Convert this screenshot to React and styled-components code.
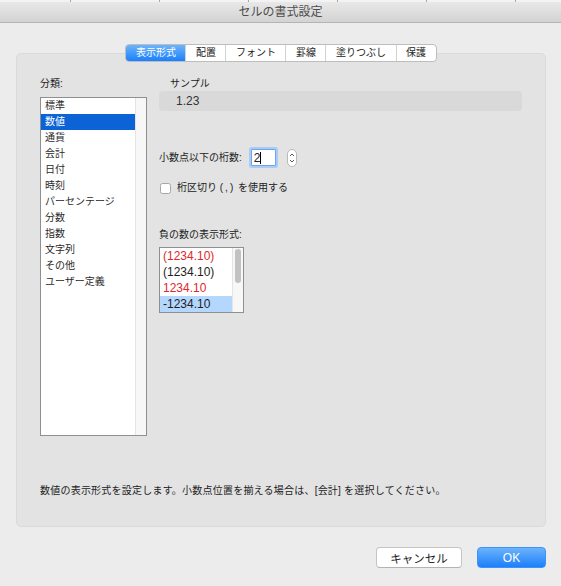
import React from 'react';
import styled, { createGlobalStyle, css } from 'styled-components';

const GlobalStyle = createGlobalStyle`
  html, body {
    margin: 0;
    padding: 0;
    background: #ececec;
  }

  body {
    font-family: "Liberation Sans", "Noto Sans CJK JP", sans-serif;
    color: #222;
  }
`;

const Window = styled('div')`
  width: 561px;
  height: 586px;
  display: flex;
  flex-direction: column;
  background: #ececec;
  overflow: hidden;
`;

const TopStrip = styled('div')`
  height: 2px;
  background: repeating-linear-gradient(to right, #f3f3f3 0 88px, #a8a8a8 88px 89px);
  background-position: -18px 0;
`;

const TitleBar = styled('div')`
  height: 20px;
  display: flex;
  align-items: center;
  justify-content: center;
  background: linear-gradient(#e8e8e8, #d3d3d3);
  border-bottom: 1px solid #b4b4b4;
  font-size: 12px;
  line-height: 20px;
  color: #4d4d4d;
`;

const Body = styled('div')`
  flex: 1;
  display: flex;
  flex-direction: column;
  padding: 0 15px 0 16px;
`;

const TabRow = styled('div')`
  display: flex;
  justify-content: center;
  margin-top: 21px;
  margin-bottom: -9px;
  position: relative;
  z-index: 1;
`;

const Tabs = styled('div')`
  display: flex;
  background: #fff;
  border: 1px solid #bdbdbd;
  border-radius: 4px;
  overflow: hidden;
`;

const Tab = styled('div')`
  padding: 0 9.5px;
  font-size: 10px;
  line-height: 16px;
  color: #222;
  & + & {
    border-left: 1px solid #d2d2d2;
  }
  ${({ active }) => active && css`
    background: linear-gradient(#6cb4fb, #1b80fb);
    color: #fff;
  `}
`;

const Panel = styled('div')`
  height: 474px;
  box-sizing: border-box;
  display: flex;
  flex-direction: column;
  background: #e3e3e3;
  border: 1px solid #dadada;
  border-radius: 5px;
  padding: 23px 23px 0 23px;
`;

const Columns = styled('div')`
  display: grid;
  grid-template-columns: 107px 1fr;
  column-gap: 12px;
`;

const Column = styled('div')`
  display: flex;
  flex-direction: column;
`;

const Label = styled('div')`
  font-size: 10px;
  line-height: 14px;
  padding-left: ${({ indent }) => indent || 0}px;
  margin-top: ${({ top }) => top || 0}px;
  margin-bottom: ${({ bottom }) => bottom || 0}px;
`;

const ListBox = styled('div')`
  height: ${({ h }) => h}px;
  width: ${({ w }) => (w ? `${w}px` : 'auto')};
  box-sizing: border-box;
  display: flex;
  background: #fff;
  border: 1px solid #8f8f8f;
  overflow: hidden;
`;

const Items = styled('div')`
  flex: 1;
  display: flex;
  flex-direction: column;
`;

const Item = styled('div')`
  height: 16px;
  line-height: 16px;
  font-size: 10px;
  padding-left: 4px;
  white-space: nowrap;
  color: #2a2a2a;
  ${({ selected }) => selected && css`
    background: #0b63d5;
    color: #fff;
  `}
`;

const NegItem = styled('div')`
  height: 16px;
  line-height: 16px;
  font-size: 12px;
  padding-left: 3px;
  white-space: nowrap;
  color: ${({ red }) => (red ? '#e0282d' : '#1e1e1e')};
  ${({ selected }) => selected && css`
    background: #b4d7fe;
  `}
`;

const Track = styled('div')`
  width: 10px;
  background: #f7f7f7;
  border-left: 1px solid #e4e4e4;
`;

const Thumb = styled('div')`
  width: 6px;
  height: 34px;
  margin: 1px 0 0 2px;
  border-radius: 3px;
  background: #c2c2c2;
`;

const SampleBox = styled('div')`
  height: 20px;
  padding-left: 17px;
  background: #d9d9d9;
  border-radius: 4px;
  font-size: 12px;
  line-height: 20px;
  color: #333;
`;

const Row = styled('div')`
  display: flex;
  align-items: center;
  height: ${({ h }) => h}px;
  margin-top: ${({ top }) => top}px;
`;

const Field = styled('div')`
  width: 25px;
  height: 17px;
  box-sizing: border-box;
  margin-left: 9px;
  display: flex;
  align-items: center;
  padding-left: 2px;
  background: #fff;
  border: 1px solid #6ea3ee;
  box-shadow: 0 0 0 2px #a9cbf5;
  border-radius: 1px;
  font-size: 12px;
`;

const Caret = styled('span')`
  width: 1px;
  height: 12px;
  background: #000;
`;

const Stepper = styled('div')`
  width: 10px;
  height: 18px;
  box-sizing: border-box;
  margin-left: 11px;
  background: #fff;
  border: 1px solid #b9b9b9;
  border-radius: 5px;
  display: flex;
  align-items: center;
  justify-content: center;
`;

const Check = styled('div')`
  width: 11px;
  height: 11px;
  box-sizing: border-box;
  margin-left: 1px;
  background: #fff;
  border: 1px solid #a6a6a6;
  border-radius: 2.5px;
`;

const CheckText = styled('span')`
  margin-left: 6px;
  font-size: 10px;
  line-height: 14px;
`;

const Spaced = styled('span')`
  letter-spacing: 2px;
`;

const Description = styled('div')`
  margin-top: auto;
  margin-bottom: 28px;
  font-size: 10px;
  line-height: 14px;
  letter-spacing: 0.22px;
`;

const Buttons = styled('div')`
  display: flex;
  justify-content: flex-end;
  gap: 15px;
  margin-top: 20px;
`;

const Button = styled('div')`
  width: ${({ w }) => w}px;
  height: 21px;
  box-sizing: border-box;
  display: flex;
  align-items: center;
  justify-content: center;
  border-radius: 4px;
  font-size: 11.5px;
  background: #fff;
  border: 1px solid #c4c4c4;
  border-bottom-color: #b3b3b3;
  color: #222;
  ${({ primary }) => primary && css`
    font-size: 12px;
    background: linear-gradient(#6bb3fb, #1c7ffb);
    border-color: #3f92f7;
    color: #fff;
  `}
`;

const categories = [
  '標準', '数値', '通貨', '会計', '日付', '時刻', 'パーセンテージ',
  '分数', '指数', '文字列', 'その他', 'ユーザー定義',
];

const negatives = [
  { text: '(1234.10)', red: true },
  { text: '(1234.10)' },
  { text: '1234.10', red: true },
  { text: '-1234.10', selected: true },
];

const tabs = ['表示形式', '配置', 'フォント', '罫線', '塗りつぶし', '保護'];

const StepperIcon = () => (
  <svg width="6" height="12" viewBox="0 0 6 12">
    <path d="M1 4 L3 2 L5 4 M1 8 L3 10 L5 8" fill="none" stroke="#444" strokeWidth="0.9" />
  </svg>
);

export default function App() {
  return (
    <Window>
      <GlobalStyle />
      <TopStrip />
      <TitleBar>セルの書式設定</TitleBar>
      <Body>
        <TabRow>
          <Tabs>
            {tabs.map((t, i) => (
              <Tab key={t} active={i === 0}>{t}</Tab>
            ))}
          </Tabs>
        </TabRow>
        <Panel>
          <Columns>
            <Column>
              <Label bottom={6}>分類:</Label>
              <ListBox h={339}>
                <Items>
                  {categories.map((c) => (
                    <Item key={c} selected={c === '数値'}>{c}</Item>
                  ))}
                </Items>
                <Track />
              </ListBox>
            </Column>
            <Column>
              <Label indent={11}>サンプル</Label>
              <SampleBox>1.23</SampleBox>
              <Row h={21} top={36}>
                <Label>小数点以下の桁数:</Label>
                <Field>2<Caret /></Field>
                <Stepper><StepperIcon /></Stepper>
              </Row>
              <Row h={12} top={14}>
                <Check />
                <CheckText>桁区切り <Spaced>(,)</Spaced> を使用する</CheckText>
              </Row>
              <Label top={34} bottom={5}>負の数の表示形式:</Label>
              <ListBox h={66} w={85}>
                <Items>
                  {negatives.map((n, i) => (
                    <NegItem key={i} red={n.red} selected={n.selected}>{n.text}</NegItem>
                  ))}
                </Items>
                <Track>
                  <Thumb />
                </Track>
              </ListBox>
            </Column>
          </Columns>
          <Description>
            数値の表示形式を設定します。小数点位置を揃える場合は、[会計] を選択してください。
          </Description>
        </Panel>
        <Buttons>
          <Button w={86}>キャンセル</Button>
          <Button w={69} primary>OK</Button>
        </Buttons>
      </Body>
    </Window>
  );
}
